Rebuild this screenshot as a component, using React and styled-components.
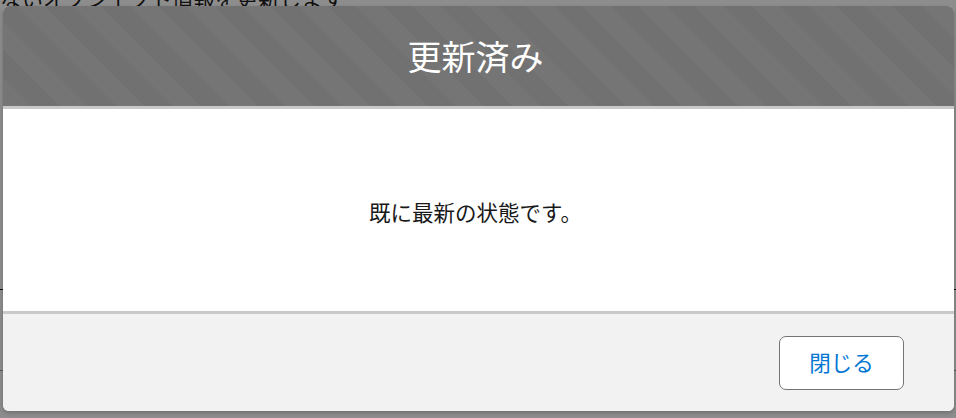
import React from "react";
import styled, { createGlobalStyle } from "styled-components";

const GlobalStyle = createGlobalStyle`
  html, body {
    margin: 0;
    padding: 0;
    width: 956px;
    height: 418px;
    overflow: hidden;
    background: #ffffff;
  }
  body {
    font-family: "Noto Sans CJK JP", "Noto Sans", sans-serif;
  }
`;

const Page = styled.div`
  width: 956px;
  height: 418px;
  display: flex;
  flex-direction: column;
  background: #ffffff;
`;

const PageText = styled.p`
  margin: -13px 0 0 0;
  font-size: 21.5px;
  line-height: 22px;
  color: #181818;
  white-space: nowrap;
`;

const PageRule = styled.hr`
  margin: ${(p) => p.$top}px 0 0 0;
  border: none;
  height: 1px;
  background: ${(p) => p.$color};
`;

const Backdrop = styled.div`
  position: fixed;
  inset: 0;
  background: rgba(8, 7, 7, 0.46);
  display: flex;
  padding: 6px 2px 7px 3px;
  box-sizing: border-box;
`;

const Modal = styled.section`
  flex: 1;
  display: flex;
  flex-direction: column;
  border-radius: 6px;
  overflow: hidden;
  box-shadow: 0 2px 4px rgba(0, 0, 0, 0.22);
  background: #ffffff;
`;

const Header = styled.header`
  height: 100px;
  flex: none;
  display: flex;
  align-items: center;
  justify-content: center;
  background-color: #717171;
  background-image: repeating-linear-gradient(
    45deg,
    rgba(255, 255, 255, 0.03) 0px,
    rgba(255, 255, 255, 0.03) 20px,
    rgba(255, 255, 255, 0) 20px,
    rgba(255, 255, 255, 0) 40px
  );
  border-bottom: 3px solid #c9c9c9;
`;

const Title = styled.h2`
  margin: 0 6px 0 0;
  font-size: 34px;
  font-weight: 400;
  color: #ffffff;
  line-height: 1.25;
`;

const Body = styled.div`
  flex: 1;
  display: flex;
  align-items: center;
  justify-content: center;
  padding: 4px 6px 0 0;
  background: #ffffff;
`;

const Message = styled.p`
  margin: 0;
  font-size: 21.5px;
  color: #181818;
  line-height: 1.5;
`;

const Footer = styled.footer`
  height: 97px;
  flex: none;
  display: flex;
  align-items: center;
  justify-content: flex-end;
  padding-right: 50px;
  background: #f2f2f2;
  border-top: 3px solid #c9c9c9;
`;

const Button = styled.button`
  width: 125px;
  height: 54px;
  box-sizing: border-box;
  border: 1px solid #747474;
  border-radius: 7px;
  background: #ffffff;
  color: #0176d3;
  font-family: "Noto Sans CJK JP", "Noto Sans", sans-serif;
  font-size: 21.5px;
  cursor: pointer;
  padding: 0 0 2px 0;
`;

export default function App() {
  return (
    <>
      <GlobalStyle />
      <Page>
        <PageText>ないオブジェクト情報を更新します</PageText>
        <PageRule $top={280} $color="#1a1a1a" />
        <PageRule $top={80} $color="#9a9a9a" />
      </Page>
      <Backdrop>
        <Modal role="dialog" aria-modal="true">
          <Header>
            <Title>更新済み</Title>
          </Header>
          <Body>
            <Message>既に最新の状態です。</Message>
          </Body>
          <Footer>
            <Button>閉じる</Button>
          </Footer>
        </Modal>
      </Backdrop>
    </>
  );
}
